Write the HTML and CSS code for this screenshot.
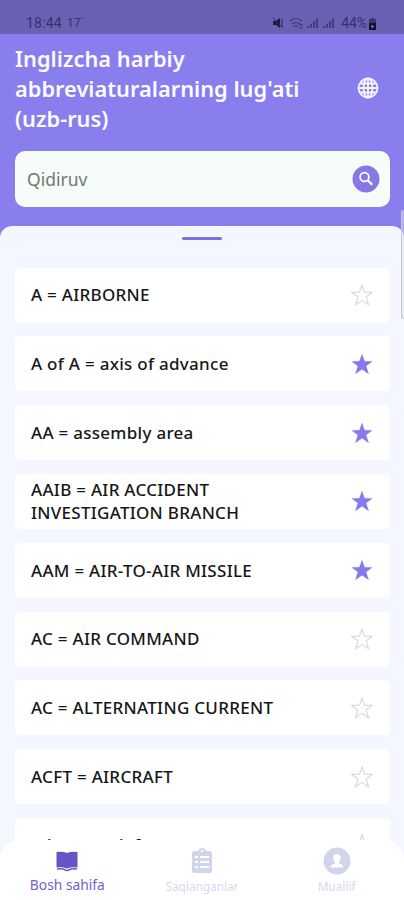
FILE: index.html
```
<!DOCTYPE html>
<html lang="uz">
<head>
<meta charset="utf-8">
<title>Inglizcha harbiy abbreviaturalarning lug'ati</title>
<link rel="stylesheet" href="styles.css">
</head>
<body>
<svg width="0" height="0" class="defs"><defs>
<symbol id="star" viewBox="0 0 22 22"><path d="M11 1 13.5 8.2 21.2 8.4 15.1 13 17.6 20.8 11 16.3 4.4 20.8 6.9 13 .8 8.4 8.5 8.2Z"/></symbol>
</defs></svg>
<div class="app">
<div class="status">
<span class="time">18:44</span><span class="temp">17<sup>°</sup></span>
<svg class="sys" width="64" height="14" viewBox="0 0 64 14">
<path d="M1 5h3l4-3v10L4 9H1Z" fill="#211c45"/><path d="M1 2l10 10M10 3v8" stroke="#2d2758" fill="none"/>
<path d="M18 5q6-5 12 0M20 8q4-3 8 0M22 10.500q2-1.500 4 0M27 9h4M27 12h4" stroke="#3d3670" fill="none" stroke-width="1.200"/>
<path d="M36 12v-2M39 12V8M42 12V5M45 12V2M52 12v-2M55 12V8M58 12V5M61 12V2" stroke="#3d3670" stroke-width="1.600"/>
</svg>
<span class="pct">44%</span>
<svg class="bat" width="9" height="13" viewBox="0 0 9 13"><path d="M3 1h3v1h2v11H1V2h2Z" fill="#3d3670"/><path d="M1 6h7v7H1Z" fill="#15112e"/><path d="M3 8l3 1.500L4 11Z" fill="#aaa4d8"/></svg>
</div>
<header>
<div class="heading"><h1>Inglizcha harbiy<br>abbreviaturalarning lug'ati<br>(uzb-rus)</h1>
<svg class="globe" width="22" height="22" viewBox="0 0 22 22" fill="none" stroke="#f7f5ff" stroke-width="1.800"><circle cx="11" cy="11" r="9.500"/><ellipse cx="11" cy="11" rx="4.500" ry="9.500"/><path d="M11 1.500v19M1.500 11h19M3 6.500h16M3 15.500h16"/></svg></div>
<div class="search"><span>Qidiruv</span><svg width="28" height="28" viewBox="0 0 28 28"><circle cx="14" cy="14" r="13.500" fill="#8778e6"/><circle cx="12.500" cy="12" r="4.400" fill="none" stroke="#fff" stroke-width="1.700"/><path d="M15.700 15.200l4.500 4.600" stroke="#fff" stroke-width="2.200"/></svg></div>
</header>
<main>
<div class="handle"></div>
<div class="list">
<div class="card"><span>A = AIRBORNE</span><svg class="star"><use href="#star"/></svg></div>
<div class="card"><span>A of A = axis of advance</span><svg class="star on"><use href="#star"/></svg></div>
<div class="card"><span>AA = assembly area</span><svg class="star on"><use href="#star"/></svg></div>
<div class="card"><span>AAIB = AIR ACCIDENT<br>INVESTIGATION BRANCH</span><svg class="star on"><use href="#star"/></svg></div>
<div class="card"><span>AAM = AIR-TO-AIR MISSILE</span><svg class="star on"><use href="#star"/></svg></div>
<div class="card"><span>AC = AIR COMMAND</span><svg class="star"><use href="#star"/></svg></div>
<div class="card"><span>AC = ALTERNATING CURRENT</span><svg class="star"><use href="#star"/></svg></div>
<div class="card"><span>ACFT = AIRCRAFT</span><svg class="star"><use href="#star"/></svg></div>
<div class="card last"><span>ad = area defence</span><svg class="star"><use href="#star"/></svg></div>
</div>
</main>
<div class="scroll"></div>
<div class="navwrap"><nav>
<div class="tab active"><svg width="28" height="28" viewBox="0 0 28 28"><path d="M3.500 5q6-1 10.500 1 4.500-2 10.500-1v15.500q-6-.7-10.500 1-4.500-1.700-10.500-1Z" fill="#6456c6"/><path d="M4 22q5-.5 7.500.5 2.500 2 5 0 2.500-1 7.500-.5" fill="none" stroke="#6456c6" stroke-width="1.500"/></svg><span>Bosh sahifa</span></div>
<div class="tab"><svg width="28" height="28" viewBox="0 0 28 28"><path d="M6 4h4q1-3 4-3t4 3h4q2 0 2 2v18q0 2-2 2H6q-2 0-2-2V6q0-2 2-2Z" fill="#d0d5ec"/><circle cx="14" cy="4" r="1.300" fill="#fff"/><path d="M7 10h3m2 0h9M7 15h3m2 0h9M7 20h3m2 0h9" stroke="#fff" stroke-width="2"/></svg><span>Saqlanganlar</span></div>
<div class="tab"><svg width="28" height="28" viewBox="0 0 28 28"><circle cx="14" cy="14" r="13.500" fill="#d0d5ec"/><path d="M14 7c5 0 4.500 6 2 8v1.500q4 .5 4.500 4h-13q.5-3.500 4.500-4V15c-2.500-2-3-8 2-8Z" fill="#fff"/></svg><span>Muallif</span></div>
</nav></div>
</div>
</body>
</html>
```
FILE: styles.css
```
* { box-sizing: border-box; }
body { margin: 0; font-family: "Noto Sans", sans-serif; }
.defs { position: absolute; }
.app { position: relative; width: 404px; height: 900px; overflow: hidden; background: #897eed; }
.status { height: 34px; padding: 12px 27px 0 26px; display: flex; align-items: center; background: #6a60b4; color: #39326a; font: 14px Roboto, sans-serif; }
.time { width: 41px; letter-spacing: .2px; }
.temp { font-size: 12px; }
.temp sup { font-size: 8px; line-height: 0; }
.sys { margin-left: auto; margin-right: 5px; }
.pct { letter-spacing: -.1px; }
.bat { margin-left: 1px; }
header { height: 192px; padding: 10px 14px 0 15px; }
.heading { height: 107px; display: flex; justify-content: space-between; }
h1 { margin: 0; font-size: 21.8px; line-height: 29.9px; font-weight: 600; color: #fafaff; white-space: nowrap; }
.globe { margin: 33px 11px 0 0; }
.search { height: 56px; border-radius: 10px; background: #f6fcf7; display: flex; align-items: center; justify-content: space-between; padding: 0 10px 0 12px; font-size: 17.5px; color: #737875; }
main { height: 674px; border-radius: 12px 12px 0 0; background: #f4f7ff; padding-top: 11px; }
.handle { width: 40px; height: 3px; margin: 0 auto; border-radius: 2px; background: #7d6ddd; }
.list { padding: 27.6px 14px 0 15px; display: grid; gap: 13.8px; }
.card { height: 55px; border-radius: 5px; background: #fff; display: flex; justify-content: space-between; align-items: center; padding: 0 17px 0 16px; color: #171717; font-size: 17px; line-height: 23.5px; font-weight: 500; letter-spacing: .28px; white-space: nowrap; }
.last span { margin-top: -1px; }
.star { width: 22px; height: 22px; fill: #fff; stroke: #d8d8d8; stroke-width: 1.1; }
.star.on { fill: #8579eb; stroke: #8579eb; stroke-width: .3; }
.scroll { position: absolute; right: 0; top: 210px; width: 3px; height: 109px; border: 1px solid #c4c5d4; border-right: 0; border-radius: 3px 0 0 3px; background: #dfe1ed80; }
.navwrap { position: absolute; left: 0; right: 0; bottom: 0; height: 60px; }
nav { height: 60px; background: #fff; border-radius: 20px 20px 0 0; display: grid; grid-template-columns: repeat(3, 1fr); }
.tab { display: flex; flex-direction: column; align-items: center; padding-top: 7px; color: #d6daef; font-size: 11.8px; }
.tab span { line-height: 22px; }
.active { color: #7062cc; font-size: 13.8px; }
.active span { line-height: 20px; }
```
